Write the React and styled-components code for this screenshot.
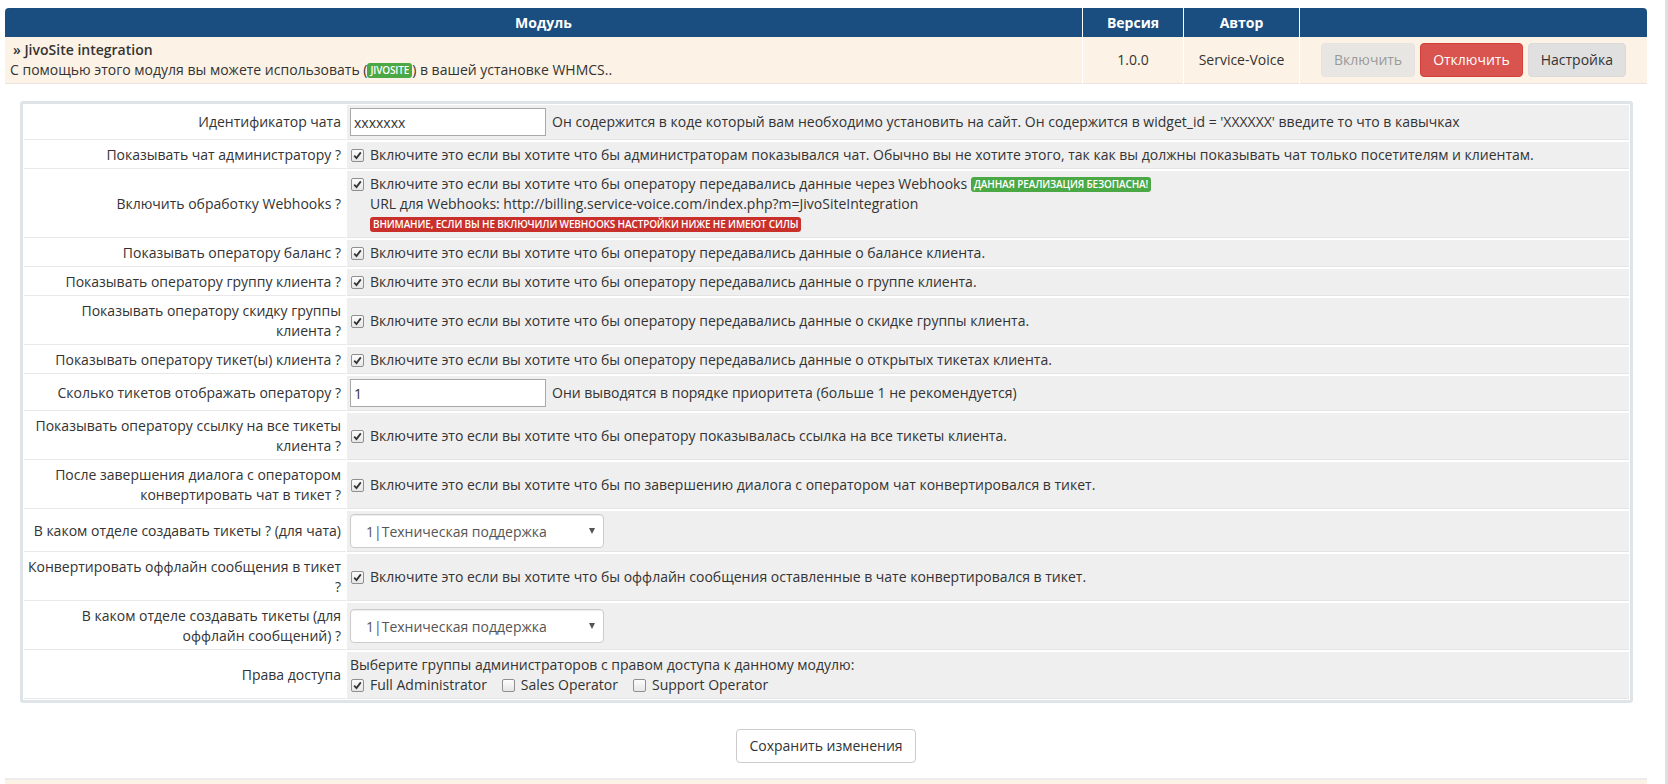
import React from 'react'
import styled, { createGlobalStyle } from 'styled-components'

const GlobalStyle = createGlobalStyle`
  html, body {
    margin: 0;
    padding: 0;
    background: #fff;
  }
  body {
    font-family: "Open Sans", "Liberation Sans", Arial, sans-serif;
    font-size: 14px;
    line-height: 20px;
    color: #333;
  }
  * {
    box-sizing: border-box;
  }
`

const Page = styled.div`
  width: 1668px;
  height: 784px;
  overflow: hidden;
  border-right: 3px solid #dde1e5;
  padding: 8px 18px 0 5px;
`

const ModuleGrid = styled.div`
  display: grid;
  grid-template-columns: 1fr 100px 115px 347px;
  column-gap: 1px;
`

const HeadCell = styled.div`
  background: #1a4e80;
  color: #fff;
  font-weight: 700;
  text-align: center;
  height: 29px;
  line-height: 29px;

  &:first-child {
    border-top-left-radius: 4px;
  }
  &:nth-child(4) {
    border-top-right-radius: 4px;
  }
`

const ModCell = styled.div`
  background: #fcf3e6;
  border-bottom: 1px solid #e9e5de;
  padding: 3px 5px;
  display: flex;
  flex-direction: column;
  justify-content: center;
  align-items: ${p => (p.$center ? 'center' : 'flex-start')};
`

const ModTitle = styled.div`
  font-weight: 600;
  padding-left: 3px;
`

const Tag = styled.span`
  display: inline-block;
  background: ${p => (p.$tone === 'red' ? '#c9302c' : '#4aa845')};
  color: #fff;
  font-size: 10px;
  font-weight: 600;
  line-height: 13px;
  padding: 1px 3px;
  border-radius: 3px;
  text-transform: uppercase;
  vertical-align: 1px;
  letter-spacing: -0.15px;
`

const Buttons = styled.div`
  display: flex;
  gap: 5px;
`

const Button = styled.button`
  font-family: inherit;
  font-size: 14px;
  line-height: 20px;
  padding: 6px 12px;
  border-radius: 4px;
  border: 1px solid ${p => (p.$variant === 'danger' ? '#d43f3a' : p.$variant === 'off' ? '#e5e3df' : '#dadada')};
  background: ${p => (p.$variant === 'danger' ? '#d9534f' : p.$variant === 'off' ? '#e8e6e2' : '#e0e0e0')};
  color: ${p => (p.$variant === 'danger' ? '#fff' : p.$variant === 'off' ? '#9a9a9a' : '#333')};
`

const Panel = styled.div`
  margin: 17px 14px 0 15px;
  border: 3px solid #dfe4e8;
  border-radius: 3px;
  padding: 1px;
`

const FormGrid = styled.div`
  display: grid;
  grid-template-columns: 322px 1fr;
  column-gap: 1px;
  row-gap: 2px;
`

const Label = styled.div`
  background: #fff;
  border-bottom: 1px solid #e8e8e8;
  padding: 3px 5px 3px 2px;
  text-align: right;
  white-space: nowrap;
  display: flex;
  align-items: center;
  justify-content: flex-end;
`

const Field = styled.div`
  background: #efefef;
  border-bottom: 1px solid #e4e4e4;
  padding: 3px 4px 3px 3px;
  display: flex;
  align-items: center;
`

const Line = styled.div`
  display: flex;
  align-items: flex-start;
`

const Stack = styled.div`
  display: flex;
  flex-direction: column;
`

const Box = styled.span`
  flex: none;
  width: 13px;
  height: 13px;
  margin: 4px 6px 0 1px;
  border: 1px solid #8f8f8f;
  border-radius: 2px;
  background: linear-gradient(#fdfdfd, #e6e6e6);
  display: inline-flex;
  align-items: center;
  justify-content: center;
`

const Check = ({ on }) => (
  <Box>
    {on && (
      <svg width="9" height="9" viewBox="0 0 9 9">
        <path d="M1.2 4.6 L3.5 7 L7.8 1.4" fill="none" stroke="#333" strokeWidth="1.8" />
      </svg>
    )}
  </Box>
)

const TextInput = styled.input`
  width: 196px;
  height: 28px;
  border: 1px solid #a9a9a9;
  padding: 2px 3px;
  font-family: inherit;
  font-size: 14px;
  color: #333;
  background: #fff;
  margin-right: 6px;
`

const SelectWrap = styled.div`
  position: relative;
  width: 254px;
`

const Select = styled.select`
  width: 100%;
  height: 34px;
  appearance: none;
  border: 1px solid #ccc;
  border-radius: 4px;
  background: #fff;
  box-shadow: inset 0 1px 1px rgba(0, 0, 0, 0.075);
  padding: 0 12px 0 15px;
  font-family: inherit;
  font-size: 14px;
  color: #555;
`

const Caret = styled.span`
  position: absolute;
  right: 9px;
  top: 14px;
  width: 0;
  height: 0;
  border-left: 3.5px solid transparent;
  border-right: 3.5px solid transparent;
  border-top: 6px solid #555;
  pointer-events: none;
`

const Groups = styled.div`
  display: flex;
  align-items: flex-start;
`

const Group = styled.span`
  display: inline-flex;
  align-items: flex-start;
  margin-right: 14px;
`

const Footer = styled.div`
  display: flex;
  justify-content: center;
  padding: 26px 0 15px;
`

const SaveButton = styled.button`
  font-family: inherit;
  font-size: 14px;
  line-height: 20px;
  padding: 6px 12px;
  background: #fff;
  border: 1px solid #ccc;
  border-radius: 4px;
  color: #333;
`

const NextRow = styled.div`
  height: 10px;
  background: #fcf3e6;
  border-top: 2px solid #ececec;
`

const DeptSelect = () => (
  <SelectWrap>
    <Select defaultValue="1">
      <option value="1">1|Техническая поддержка</option>
    </Select>
    <Caret />
  </SelectWrap>
)

const CheckText = ({ children }) => (
  <Line>
    <Check on />
    <Stack>{children}</Stack>
  </Line>
)

const rows = [
  {
    label: ['Идентификатор чата'],
    field: (
      <>
        <TextInput defaultValue="xxxxxxx" />
        Он содержится в коде который вам необходимо установить на сайт. Он содержится в widget_id = 'XXXXXX' введите то что в кавычках
      </>
    ),
  },
  {
    label: ['Показывать чат администратору ?'],
    field: <CheckText>Включите это если вы хотите что бы администраторам показывался чат. Обычно вы не хотите этого, так как вы должны показывать чат только посетителям и клиентам.</CheckText>,
  },
  {
    label: ['Включить обработку Webhooks ?'],
    field: (
      <CheckText>
        <span>
          Включите это если вы хотите что бы оператору передавались данные через Webhooks <Tag>Данная реализация безопасна!</Tag>
        </span>
        <span>URL для Webhooks: http://billing.service-voice.com/index.php?m=JivoSiteIntegration</span>
        <span>
          <Tag $tone="red">Внимание, если вы не включили webhooks настройки ниже не имеют силы</Tag>
        </span>
      </CheckText>
    ),
  },
  { label: ['Показывать оператору баланс ?'], field: <CheckText>Включите это если вы хотите что бы оператору передавались данные о балансе клиента.</CheckText> },
  { label: ['Показывать оператору группу клиента ?'], field: <CheckText>Включите это если вы хотите что бы оператору передавались данные о группе клиента.</CheckText> },
  { label: ['Показывать оператору скидку группы', 'клиента ?'], field: <CheckText>Включите это если вы хотите что бы оператору передавались данные о скидке группы клиента.</CheckText> },
  { label: ['Показывать оператору тикет(ы) клиента ?'], field: <CheckText>Включите это если вы хотите что бы оператору передавались данные о открытых тикетах клиента.</CheckText> },
  {
    label: ['Сколько тикетов отображать оператору ?'],
    field: (
      <>
        <TextInput defaultValue="1" />
        Они выводятся в порядке приоритета (больше 1 не рекомендуется)
      </>
    ),
  },
  { label: ['Показывать оператору ссылку на все тикеты', 'клиента ?'], field: <CheckText>Включите это если вы хотите что бы оператору показывалась ссылка на все тикеты клиента.</CheckText> },
  { label: ['После завершения диалога с оператором', 'конвертировать чат в тикет ?'], field: <CheckText>Включите это если вы хотите что бы по завершению диалога с оператором чат конвертировался в тикет.</CheckText> },
  { label: ['В каком отделе создавать тикеты ? (для чата)'], field: <DeptSelect /> },
  { label: ['Конвертировать оффлайн сообщения в тикет', '?'], field: <CheckText>Включите это если вы хотите что бы оффлайн сообщения оставленные в чате конвертировался в тикет.</CheckText> },
  { label: ['В каком отделе создавать тикеты (для', 'оффлайн сообщений) ?'], field: <DeptSelect /> },
  {
    label: ['Права доступа'],
    field: (
      <Stack>
        <span>Выберите группы администраторов с правом доступа к данному модулю:</span>
        <Groups>
          <Group>
            <Check on />
            Full Administrator
          </Group>
          <Group>
            <Check />
            Sales Operator
          </Group>
          <Group>
            <Check />
            Support Operator
          </Group>
        </Groups>
      </Stack>
    ),
  },
]

export default function App() {
  return (
    <Page>
      <GlobalStyle />
      <ModuleGrid>
        <HeadCell>Модуль</HeadCell>
        <HeadCell>Версия</HeadCell>
        <HeadCell>Автор</HeadCell>
        <HeadCell />
        <ModCell>
          <ModTitle>» JivoSite integration</ModTitle>
          <span>
            С помощью этого модуля вы можете использовать (<Tag>jivosite</Tag>) в вашей установке WHMCS..
          </span>
        </ModCell>
        <ModCell $center>1.0.0</ModCell>
        <ModCell $center>Service-Voice</ModCell>
        <ModCell $center>
          <Buttons>
            <Button $variant="off" disabled>
              Включить
            </Button>
            <Button $variant="danger">Отключить</Button>
            <Button>Настройка</Button>
          </Buttons>
        </ModCell>
      </ModuleGrid>
      <Panel>
        <FormGrid>
          {rows.map(r => (
            <React.Fragment key={r.label.join(' ')}>
              <Label>
                <div>
                  {r.label.map((l, i) => (
                    <React.Fragment key={i}>
                      {i > 0 && <br />}
                      {l}
                    </React.Fragment>
                  ))}
                </div>
              </Label>
              <Field>{r.field}</Field>
            </React.Fragment>
          ))}
        </FormGrid>
      </Panel>
      <Footer>
        <SaveButton>Сохранить изменения</SaveButton>
      </Footer>
      <NextRow />
    </Page>
  )
}
